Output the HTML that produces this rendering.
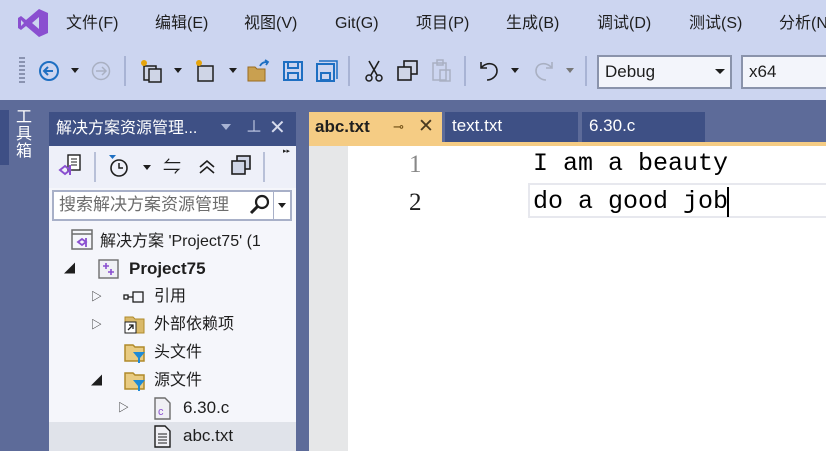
<!DOCTYPE html>
<html><head><meta charset="utf-8"><style>
*{margin:0;padding:0;box-sizing:border-box}
body{width:826px;height:451px;overflow:hidden;background:#5d6b99;font-family:"Liberation Sans","Microsoft YaHei","Noto Sans CJK SC",sans-serif;position:relative;line-height:20px}
.a{position:absolute;white-space:nowrap}
.top{left:0;top:0;width:826px;height:100px;background:#ccd5f0}
.menu{top:14px;font-size:16px;color:#1e1e1e;line-height:20px}
.sep{width:2px;height:30px;background:#a8b3d4;top:56px}
.tree{font-size:16px;color:#1e1e1e;line-height:20px}
.tri{font-size:11px;color:#1e1e1e;line-height:12px}
</style></head><body>
<div class="a top"></div>
<svg class="a" style="left:17px;top:8px" width="32" height="30" viewBox="0 0 32 30"><path d="M22 1 L31 5 V25 L22 29 L9 18 L4 22 L1 20 V10 L4 8 L9 12 Z M22 9 L15 15 L22 21 Z M4 12 V18 L7 15 Z" fill="#8a4fd0"/></svg>
<div class="a menu" style="left:66px">文件(F)</div>
<div class="a menu" style="left:155px">编辑(E)</div>
<div class="a menu" style="left:244px">视图(V)</div>
<div class="a menu" style="left:335px">Git(G)</div>
<div class="a menu" style="left:416px">项目(P)</div>
<div class="a menu" style="left:506px">生成(B)</div>
<div class="a menu" style="left:597px">调试(D)</div>
<div class="a menu" style="left:689px">测试(S)</div>
<div class="a menu" style="left:779px">分析(N</div>
<div class="a" style="left:19px;top:57px;width:6px;height:26px;background:repeating-linear-gradient(#8a93b0 0 2px,transparent 2px 4px)"></div>
<svg class="a" style="left:38px;top:60px" width="22" height="22"><circle cx="11" cy="11" r="9" fill="none" stroke="#1e6fc2" stroke-width="2"/><path d="M15 11H7M10 7L6 11L10 15" fill="none" stroke="#1e6fc2" stroke-width="2"/></svg>
<div class="a" style="left:71px;top:68px;border:4px solid transparent;border-top:5px solid #1e1e1e"></div>
<svg class="a" style="left:91px;top:61px" width="20" height="20"><circle cx="10" cy="10" r="8.5" fill="none" stroke="#a9b0c2" stroke-width="1.5"/><path d="M5 10H14M11 6L15 10L11 14" fill="none" stroke="#a9b0c2" stroke-width="1.5"/></svg>
<div class="a sep" style="left:124px"></div>
<svg class="a" style="left:138px;top:58px" width="28" height="26"><rect x="6" y="8" width="12" height="14" fill="#cfd5e6" stroke="#1e1e1e" stroke-width="1.5"/><rect x="11" y="11" width="12" height="13" fill="#cfd5e6" stroke="#1e1e1e" stroke-width="1.5"/><circle cx="6" cy="5" r="3" fill="#e5a40c"/></svg>
<div class="a" style="left:174px;top:68px;border:4px solid transparent;border-top:5px solid #1e1e1e"></div>
<svg class="a" style="left:194px;top:58px" width="24" height="26"><rect x="4" y="8" width="15" height="15" fill="#cfd5e6" stroke="#1e1e1e" stroke-width="1.5"/><circle cx="5" cy="5" r="3" fill="#e5a40c"/></svg>
<div class="a" style="left:229px;top:68px;border:4px solid transparent;border-top:5px solid #1e1e1e"></div>
<svg class="a" style="left:247px;top:59px" width="24" height="24"><path d="M1 8h7l2 2h8v12H1z" fill="#c9a050" stroke="#9a6b1f"/><path d="M13 7c2-4 5-4 8-4M18 1l3 2-2 3" fill="none" stroke="#1e6fc2" stroke-width="1.8"/></svg>
<svg class="a" style="left:282px;top:60px" width="22" height="22"><rect x="2" y="2" width="18" height="18" fill="none" stroke="#1e6fc2" stroke-width="2"/><rect x="6" y="2" width="10" height="6" fill="none" stroke="#1e6fc2" stroke-width="2"/><rect x="6" y="13" width="10" height="7" fill="none" stroke="#1e6fc2" stroke-width="2"/></svg>
<svg class="a" style="left:315px;top:60px" width="24" height="22"><path d="M4 1h18v18" fill="none" stroke="#1e6fc2" stroke-width="1.5"/><rect x="2" y="4" width="17" height="17" fill="none" stroke="#1e6fc2" stroke-width="2"/><rect x="6" y="13" width="9" height="7" fill="none" stroke="#1e6fc2" stroke-width="2"/></svg>
<div class="a sep" style="left:348px"></div>
<svg class="a" style="left:362px;top:59px" width="24" height="24"><path d="M7 2L15 16M17 2L9 16" stroke="#1e1e1e" stroke-width="1.6"/><circle cx="7" cy="19" r="3" fill="none" stroke="#1e1e1e" stroke-width="1.5"/><circle cx="17" cy="19" r="3" fill="none" stroke="#1e1e1e" stroke-width="1.5"/></svg>
<svg class="a" style="left:396px;top:60px" width="24" height="24"><rect x="8" y="1" width="13" height="13" fill="#cfd5e6" stroke="#1e1e1e" stroke-width="1.6"/><rect x="2" y="7" width="13" height="13" fill="#cfd5e6" stroke="#1e1e1e" stroke-width="1.6"/></svg>
<svg class="a" style="left:430px;top:58px" width="24" height="26"><rect x="3" y="5" width="13" height="17" fill="none" stroke="#a9b0c2" stroke-width="1.5"/><rect x="7" y="2" width="6" height="5" fill="none" stroke="#a9b0c2" stroke-width="1.5"/><rect x="10" y="12" width="10" height="11" fill="none" stroke="#a9b0c2" stroke-width="1.5"/></svg>
<div class="a sep" style="left:464px"></div>
<svg class="a" style="left:477px;top:58px" width="24" height="26"><path d="M4 4V10H10M4 10C10 3 20 5 20 13C20 18 15 22 10 22" fill="none" stroke="#1e1e1e" stroke-width="1.6"/></svg>
<div class="a" style="left:511px;top:68px;border:4px solid transparent;border-top:5px solid #1e1e1e"></div>
<svg class="a" style="left:532px;top:58px" width="24" height="26"><path d="M20 4V10H14M20 10C14 3 4 5 4 13C4 18 9 22 14 22" fill="none" stroke="#a9b0c2" stroke-width="1.6"/></svg>
<div class="a" style="left:566px;top:68px;border:4px solid transparent;border-top:5px solid #777"></div>
<div class="a sep" style="left:585px"></div>
<div class="a" style="left:597px;top:55px;width:135px;height:34px;background:#f3f5fb;border:2px solid #8a93ab;font-size:17px;padding:5px 0 0 6px;color:#1e1e1e">Debug</div>
<div class="a" style="left:715px;top:69px;border:5px solid transparent;border-top:5px solid #1e1e1e"></div>
<div class="a" style="left:741px;top:55px;width:90px;height:34px;background:#f3f5fb;border:2px solid #8a93ab;font-size:17px;padding:5px 0 0 6px;color:#1e1e1e">x64</div>
<div class="a" style="left:0;top:110px;width:9px;height:55px;background:#3e4f85"></div>
<div class="a" style="left:16px;top:109px;width:18px;color:#fff;font-size:16px;line-height:17px;white-space:normal">工<br>具<br>箱</div>
<div class="a" style="left:49px;top:112px;width:247px;height:34px;background:#3e5085"></div>
<div class="a" style="left:56px;top:119px;color:#fff;font-size:16px">解决方案资源管理...</div>
<div class="a" style="left:221px;top:124px;border:5px solid transparent;border-top:6px solid #a8b3d4"></div>
<div class="a" style="left:246px;top:118px;color:#c5cde6;font-size:16px">⊥</div>
<div class="a" style="left:269px;top:118px;color:#d6dbed;font-size:20px">✕</div>
<div class="a" style="left:49px;top:146px;width:247px;height:305px;background:#f5f6fb"></div>
<div class="a" style="left:49px;top:146px;width:247px;height:42px;background:#eef0f9"></div>
<svg class="a" style="left:58px;top:153px" width="26" height="26"><rect x="10" y="2" width="12" height="15" fill="#fff" stroke="#1e1e1e" stroke-width="1.4"/><path d="M13 6h6M13 9h6M13 12h6" stroke="#1e1e1e"/><path d="M2 17l5-4 5 4-5 4z M12 12v10" fill="none" stroke="#8a4fd0" stroke-width="2"/></svg>
<div class="a" style="left:94px;top:152px;width:2px;height:30px;background:#b8c0d8"></div>
<svg class="a" style="left:106px;top:154px" width="24" height="24"><path d="M3 1h7l-3.5 4z" fill="#1e6fc2"/><circle cx="13" cy="14" r="8" fill="none" stroke="#1e1e1e" stroke-width="1.6"/><path d="M13 9v5h4" fill="none" stroke="#1e1e1e" stroke-width="1.5"/></svg>
<div class="a" style="left:143px;top:165px;border:4px solid transparent;border-top:5px solid #1e1e1e"></div>
<div class="a" style="left:163px;top:157px;font-size:18px;color:#1e1e1e">⇋</div>
<svg class="a" style="left:197px;top:157px" width="20" height="20"><path d="M3 10l7-6 7 6M3 16l7-6 7 6" fill="none" stroke="#1e1e1e" stroke-width="1.6"/></svg>
<svg class="a" style="left:229px;top:154px" width="24" height="24"><rect x="8" y="2" width="13" height="13" fill="#cfd5e6" stroke="#1e1e1e" stroke-width="1.6"/><rect x="3" y="7" width="13" height="13" fill="#cfd5e6" stroke="#1e1e1e" stroke-width="1.6"/></svg>
<div class="a" style="left:263px;top:152px;width:2px;height:30px;background:#b8c0d8"></div>
<div class="a" style="left:283px;top:148px;font-size:7px;line-height:8px;color:#1e1e1e">▸▸</div>
<div class="a" style="left:52px;top:190px;width:240px;height:31px;background:#fff;border:2px solid #a8b0c8"></div>
<div class="a" style="left:59px;top:195px;font-size:17px;color:#6d6d6d">搜索解决方案资源管理</div>
<svg class="a" style="left:249px;top:194px" width="22" height="22"><circle cx="13" cy="8" r="6" fill="none" stroke="#1e1e1e" stroke-width="2.2"/><path d="M9 12L2 19" stroke="#1e1e1e" stroke-width="3"/></svg>
<div class="a" style="left:273px;top:192px;width:1px;height:27px;background:#a8b0c8"></div>
<div class="a" style="left:278px;top:203px;border:4px solid transparent;border-top:5px solid #1e1e1e"></div>
<svg class="a" style="left:71px;top:229px" width="24" height="22"><rect x="1" y="1" width="20" height="19" fill="#f5f6fb" stroke="#6d6d6d" stroke-width="1.5"/><path d="M1 5h20" stroke="#6d6d6d" stroke-width="1.5"/><path d="M7 13l4-3 4 3-4 3z M15 9v9" fill="none" stroke="#8a4fd0" stroke-width="1.8"/></svg>
<div class="a tree" style="left:100px;top:232px">解决方案 'Project75' (1</div>
<div class="a tri" style="left:64px;top:263px">◢</div>
<svg class="a" style="left:98px;top:258px" width="22" height="22"><rect x="1" y="2" width="19" height="18" fill="#f0f0f5" stroke="#6d6d6d" stroke-width="1.4"/><path d="M5 8h6M8 5v6M10 14h6M13 11v6" stroke="#8a4fd0" stroke-width="1.6"/></svg>
<div class="a tree" style="left:129px;top:259px;font-weight:bold;font-size:17px">Project75</div>
<div class="a tri" style="left:91px;top:291px">▷</div>
<svg class="a" style="left:123px;top:290px" width="28" height="14"><rect x="1" y="5" width="4" height="4" fill="none" stroke="#1e1e1e" stroke-width="1.3"/><path d="M5 7h5" stroke="#1e1e1e" stroke-width="1.3"/><rect x="10" y="2" width="10" height="10" fill="none" stroke="#1e1e1e" stroke-width="1.3"/></svg>
<div class="a tree" style="left:154px;top:287px">引用</div>
<div class="a tri" style="left:91px;top:319px">▷</div>
<svg class="a" style="left:124px;top:314px" width="24" height="22"><path d="M1 3h8l2 2h9v14H1z" fill="#d9b96a" stroke="#b08a2a"/><rect x="1" y="8" width="11" height="11" fill="#fff" stroke="#1e1e1e"/><path d="M4 16l5-5M5 11h4v4" fill="none" stroke="#1e1e1e" stroke-width="1.3"/></svg>
<div class="a tree" style="left:154px;top:315px">外部依赖项</div>
<svg class="a" style="left:124px;top:342px" width="24" height="22"><path d="M1 3h8l2 2h9v14H1z" fill="#e8cb82" stroke="#b08a2a" stroke-width="1.5"/><path d="M9 10h12l-5 6v5h-2v-5z" fill="#1e8ad6"/></svg>
<div class="a tree" style="left:154px;top:343px">头文件</div>
<div class="a tri" style="left:91px;top:375px">◢</div>
<svg class="a" style="left:124px;top:370px" width="24" height="22"><path d="M1 3h8l2 2h9v14H1z" fill="#e8cb82" stroke="#b08a2a" stroke-width="1.5"/><path d="M9 10h12l-5 6v5h-2v-5z" fill="#1e8ad6"/></svg>
<div class="a tree" style="left:154px;top:371px">源文件</div>
<div class="a tri" style="left:118px;top:402px">▷</div>
<svg class="a" style="left:153px;top:397px" width="20" height="24"><path d="M2 1h10l5 5v16H2z" fill="#f0f0f5" stroke="#6d6d6d" stroke-width="1.4"/><text x="5" y="18" font-size="11" fill="#8a4fd0" font-family="Liberation Sans">c</text></svg>
<div class="a tree" style="left:183px;top:398px;font-size:17px">6.30.c</div>
<div class="a" style="left:49px;top:422px;width:247px;height:29px;background:#e0e3ea"></div>
<svg class="a" style="left:153px;top:425px" width="20" height="24"><path d="M2 1h10l5 5v16H2z" fill="#f0f0f5" stroke="#1e1e1e" stroke-width="1.4"/><path d="M5 9h9M5 12h9M5 15h9M5 18h9" stroke="#1e1e1e"/></svg>
<div class="a tree" style="left:183px;top:426px;font-size:17px">abc.txt</div>
<div class="a" style="left:309px;top:112px;width:133px;height:34px;background:#f5cc84"></div>
<div class="a" style="left:315px;top:117px;font-size:17px;font-weight:bold;color:#1e1e1e">abc.txt</div>
<div class="a" style="left:393px;top:117px;font-size:13px;color:#6b4a10">⊸</div>
<div class="a" style="left:418px;top:117px;font-size:19px;color:#4a3a20">✕</div>
<div class="a" style="left:445px;top:112px;width:133px;height:30px;background:#3e5085"></div>
<div class="a" style="left:452px;top:116px;font-size:17px;color:#fff">text.txt</div>
<div class="a" style="left:582px;top:112px;width:123px;height:30px;background:#3e5085"></div>
<div class="a" style="left:589px;top:116px;font-size:17px;color:#fff">6.30.c</div>
<div class="a" style="left:309px;top:142px;width:517px;height:4px;background:#f5cc84"></div>
<div class="a" style="left:309px;top:146px;width:517px;height:305px;background:#fff"></div>
<div class="a" style="left:309px;top:146px;width:39px;height:305px;background:#e6e7e8"></div>
<div class="a" style="left:528px;top:183px;width:298px;height:35px;border:2px solid #e7e8ee;border-right:none"></div>
<div class="a" style="left:409px;top:152px;font-family:'Liberation Serif',serif;font-size:25px;line-height:26px;color:#888">1</div>
<div class="a" style="left:409px;top:190px;font-family:'Liberation Serif',serif;font-size:25px;line-height:26px;color:#1e1e1e">2</div>
<div class="a" style="left:533px;top:151px;font-family:'Liberation Mono',monospace;font-size:25px;line-height:26px;color:#000">I am a beauty</div>
<div class="a" style="left:533px;top:189px;font-family:'Liberation Mono',monospace;font-size:25px;line-height:26px;color:#000">do a good job</div>
<div class="a" style="left:727px;top:187px;width:2px;height:30px;background:#000"></div>
</body></html>
